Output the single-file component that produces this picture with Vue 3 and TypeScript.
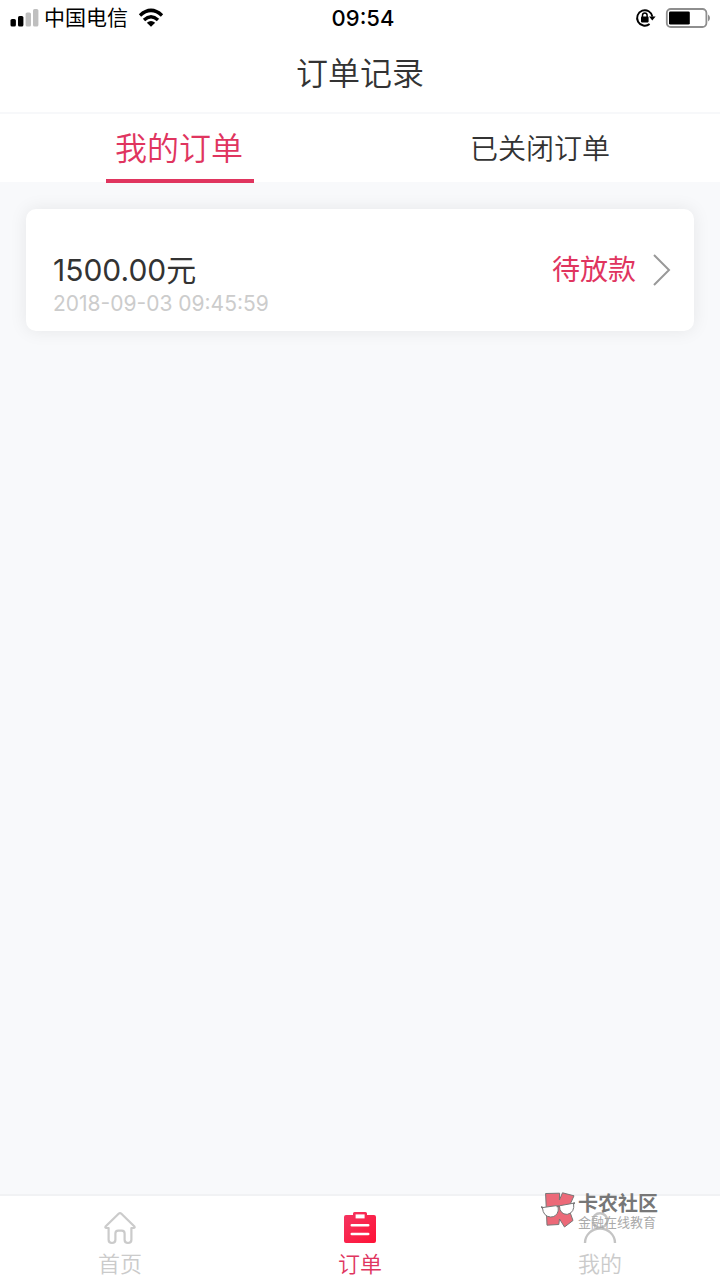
<script setup lang="ts">
import { ref } from 'vue'

interface Order {
  id: number
  amount: string
  time: string
  status: string
}

const activeTab = ref(0)
const activeNav = ref(1)
const tabs: string[] = ['我的订单', '已关闭订单']
const navItems: string[] = ['首页', '订单', '我的']
const orders: Order[] = [
  { id: 1, amount: '1500.00元', time: '2018-09-03 09:45:59', status: '待放款' },
]
</script>

<template>
  <div class="page">
    <div class="status">
      <div class="carrier">
        <svg class="signal" width="30" height="20" viewBox="0 0 30 20" aria-hidden="true">
          <rect x="1.5" y="11" width="5.4" height="7.5" rx="1.6" fill="#000" />
          <rect x="9" y="8" width="5.4" height="10.5" rx="1.6" fill="#000" />
          <rect x="16.6" y="4.5" width="5.4" height="14" rx="1.6" fill="#bfbfbf" />
          <rect x="24" y="1" width="5.4" height="17.5" rx="1.6" fill="#bfbfbf" />
        </svg>
        <span class="carrier-name">中国电信</span>
        <svg width="26" height="20" viewBox="0 0 26 20" fill="none" stroke="#000" stroke-width="3.4" aria-hidden="true">
          <path d="M2 7.4Q13-2.6 24 7.4" />
          <path d="M6 12Q13 5.6 20 12" />
          <path d="M8.8 14.8Q13 11 17.2 14.8L13 18.8Z" fill="#000" stroke="none" />
        </svg>
      </div>
      <span class="clock">09:54</span>
      <div class="indicators">
        <svg width="22" height="20" viewBox="0 0 22 20" aria-hidden="true">
          <path d="M14.6 16A7.7 7.7 0 1 1 17.4 8.6" fill="none" stroke="#000" stroke-width="1.9" />
          <path d="M14 8.4H20.6L17.3 12.4Z" />
          <rect x="6" y="8.6" width="7.6" height="5.8" rx=".8" />
          <path d="M7.5 9V7.2a2.3 2.3 0 0 1 4.6 0V9" fill="none" stroke="#000" stroke-width="1.5" />
        </svg>
        <svg width="46" height="20" viewBox="0 0 46 20" aria-hidden="true">
          <rect x="1.8" y="1" width="39.6" height="18" rx="4" fill="#fff" stroke="#8e8e8e" stroke-width="1.8" />
          <rect x="4" y="3.4" width="20.8" height="13.2" rx="1.4" fill="#000" />
          <path d="M43 6.5Q45 7.5 45 10T43 13.5Z" fill="#8e8e8e" />
        </svg>
      </div>
    </div>

    <header class="header"><h1>订单记录</h1></header>

    <div class="tabs" role="tablist">
      <button
        v-for="(tab, i) in tabs"
        :key="tab"
        type="button"
        role="tab"
        class="tab"
        :class="{ active: activeTab === i }"
        :aria-selected="activeTab === i"
        @click="activeTab = i"
      >
        <span>{{ tab }}</span>
      </button>
    </div>

    <main class="content">
      <a v-for="order in orders" :key="order.id" href="#" class="card" @click.prevent>
        <div class="info">
          <span class="amount">{{ order.amount }}</span>
          <time class="time">{{ order.time }}</time>
        </div>
        <span class="state">{{ order.status }}</span>
        <svg class="chevron" width="20" height="34" viewBox="0 0 20 34" aria-hidden="true">
          <path d="M2 2L17 17L2 32" fill="none" stroke="#999" stroke-width="2" />
        </svg>
      </a>
    </main>

    <nav class="nav">
      <a
        v-for="(item, i) in navItems"
        :key="item"
        href="#"
        class="nav-item"
        :class="{ active: activeNav === i }"
        @click.prevent="activeNav = i"
      >
        <svg v-if="i === 0" width="34" height="34" viewBox="0 0 34 34" fill="none" stroke="#cbcbcb" stroke-width="2.2" stroke-linejoin="round" aria-hidden="true">
          <path d="M15.6 2.8Q17 1.5 18.4 2.8L31.2 15.2Q32.4 17 30.4 17H28.4V28.8Q28.4 32 25 32Q21.6 32 21.6 28.8V22.6Q21.6 19.6 18.8 19.6H15.2Q12.4 19.6 12.4 22.6V28.8Q12.4 32 9 32Q5.6 32 5.6 28.8V17H3.6Q1.6 17 2.8 15.2Z" />
        </svg>
        <svg v-else-if="i === 1" width="34" height="34" viewBox="0 0 34 34" aria-hidden="true">
          <defs>
            <linearGradient id="clipboard-fill" x1="0" y1="0" x2="1" y2="1">
              <stop offset="0" stop-color="#f43562" />
              <stop offset="1" stop-color="#ff1236" />
            </linearGradient>
          </defs>
          <path fill="url(#clipboard-fill)" d="M3 4H10V2.5Q10 1 11.5 1H22.5Q24 1 24 2.5V4H31Q33 4 33 6V30Q33 32 31 32H3Q1 32 1 30V6Q1 4 3 4Z" />
          <rect x="12.6" y="3.4" width="9" height="4" fill="#fff" />
          <path d="M8.8 14.2H25.2M8.8 23H25.2" stroke="#fff" stroke-width="2.6" stroke-linecap="round" />
        </svg>
        <svg v-else width="34" height="34" viewBox="0 0 34 34" fill="none" stroke="#c4c4c4" stroke-width="2.4" aria-hidden="true">
          <circle cx="17" cy="9.5" r="7.3" />
          <path d="M2 32a15 14.5 0 0 1 30 0" />
        </svg>
        <span>{{ item }}</span>
      </a>
      <div class="badge">
        <svg width="34" height="36" viewBox="0 0 34 36" stroke="#777" stroke-linejoin="round" aria-hidden="true">
          <path d="M4.6 1.5L18.6 1.2L18.4 8L21.5 .8L33 3.8L27.5 16L32 28.5L23.5 35L18.5 27L17.8 32.5L6 33.2Z" fill="#ec6978" stroke-width="1" />
          <path d="M1.4 15.6L15.6 13.6Q18 15 17.2 19Q15.4 25 9.6 25Q2.2 24.6 1.4 15.6Z" fill="#fff" stroke-width="1" />
          <path d="M18.4 13.8L32.6 11.2Q34 20.6 26.2 22.4Q18.8 22.4 18.4 13.8Z" fill="#fff" stroke-width="1" />
          <path d="M0 14.8L2 16M15.6 14.4L18.6 14.2M32 11.8L34 10.8" fill="none" stroke-width="1.8" />
        </svg>
        <div class="badge-text">
          <strong>卡农社区</strong>
          <small>金融在线教育</small>
        </div>
      </div>
    </nav>
  </div>
</template>

<style>
body {
  margin: 0;
}
</style>

<style scoped>
.page {
  display: flex;
  flex-direction: column;
  min-height: 100vh;
  background: #f8f9fb;
  color: #333;
  font-family: Inter, "Noto Sans CJK SC", sans-serif;
}
.page * {
  box-sizing: border-box;
}
svg {
  display: block;
  flex: none;
}
.status {
  display: grid;
  grid-template-columns: 1fr auto 1fr;
  align-items: center;
  height: 36px;
  padding: 0 9px;
  background: #fff;
  color: #000;
}
.carrier {
  display: flex;
  align-items: center;
}
.carrier-name {
  margin: 0 10px 0 5px;
  font-size: 21px;
  line-height: 36px;
}
.clock {
  padding-left: 6px;
  font-size: 22px;
  font-weight: 500;
  line-height: 36px;
}
.indicators {
  display: flex;
  justify-content: flex-end;
  gap: 8px;
}
.header {
  height: 78px;
  background: #fff;
  border-bottom: 2px solid #f7f8fa;
  text-align: center;
}
h1 {
  margin: 0;
  font-size: 32px;
  font-weight: 350;
  line-height: 76px;
}
.tabs {
  display: flex;
  height: 68px;
  background: #fff;
}
.tab {
  flex: 1;
  display: flex;
  justify-content: center;
  padding: 0;
  border: 0;
  background: none;
  color: #333;
  font: 350 28px/70px Inter, "Noto Sans CJK SC", sans-serif;
}
.tab.active {
  color: #e0355f;
  font-size: 32px;
}
.tab.active span {
  height: 69px;
  padding: 0 11px 0 9px;
  border-bottom: 4px solid #e0355f;
}
.content {
  flex: 1;
  padding: 27px 26px;
}
.card {
  display: flex;
  align-items: center;
  height: 122px;
  padding: 0 22px 0 27px;
  border-radius: 10px;
  background: #fff;
  box-shadow: 0 0 18px rgba(0, 0, 0, 0.08);
  color: #333;
  text-decoration: none;
}
.info {
  flex: 1;
  display: flex;
  flex-direction: column;
  padding-top: 26px;
}
.amount {
  font-size: 30px;
  line-height: 42px;
}
.time {
  color: #ccc;
  font-size: 21px;
  line-height: 26px;
}
.state {
  color: #e0355f;
  font-size: 28px;
  line-height: 42px;
}
.chevron {
  margin-left: 16px;
}
.nav {
  position: relative;
  display: flex;
  height: 86px;
  border-top: 2px solid #f1f2f4;
  background: #fff;
}
.nav-item {
  flex: 1;
  display: flex;
  flex-direction: column;
  align-items: center;
  padding-top: 15px;
  color: #cbcbcb;
  font-size: 22px;
  font-weight: 350;
  line-height: 38px;
  text-decoration: none;
}
.nav-item.active {
  color: #e0355f;
}
.badge {
  position: absolute;
  top: -4px;
  right: 62px;
  display: flex;
  gap: 3px;
  pointer-events: none;
}
.badge-text {
  display: flex;
  flex-direction: column;
  color: #777;
}
.badge-text strong {
  font-size: 20px;
  font-weight: 700;
  line-height: 24px;
}
.badge-text small {
  color: #aaa;
  font-size: 13px;
  line-height: 12px;
}
</style>
